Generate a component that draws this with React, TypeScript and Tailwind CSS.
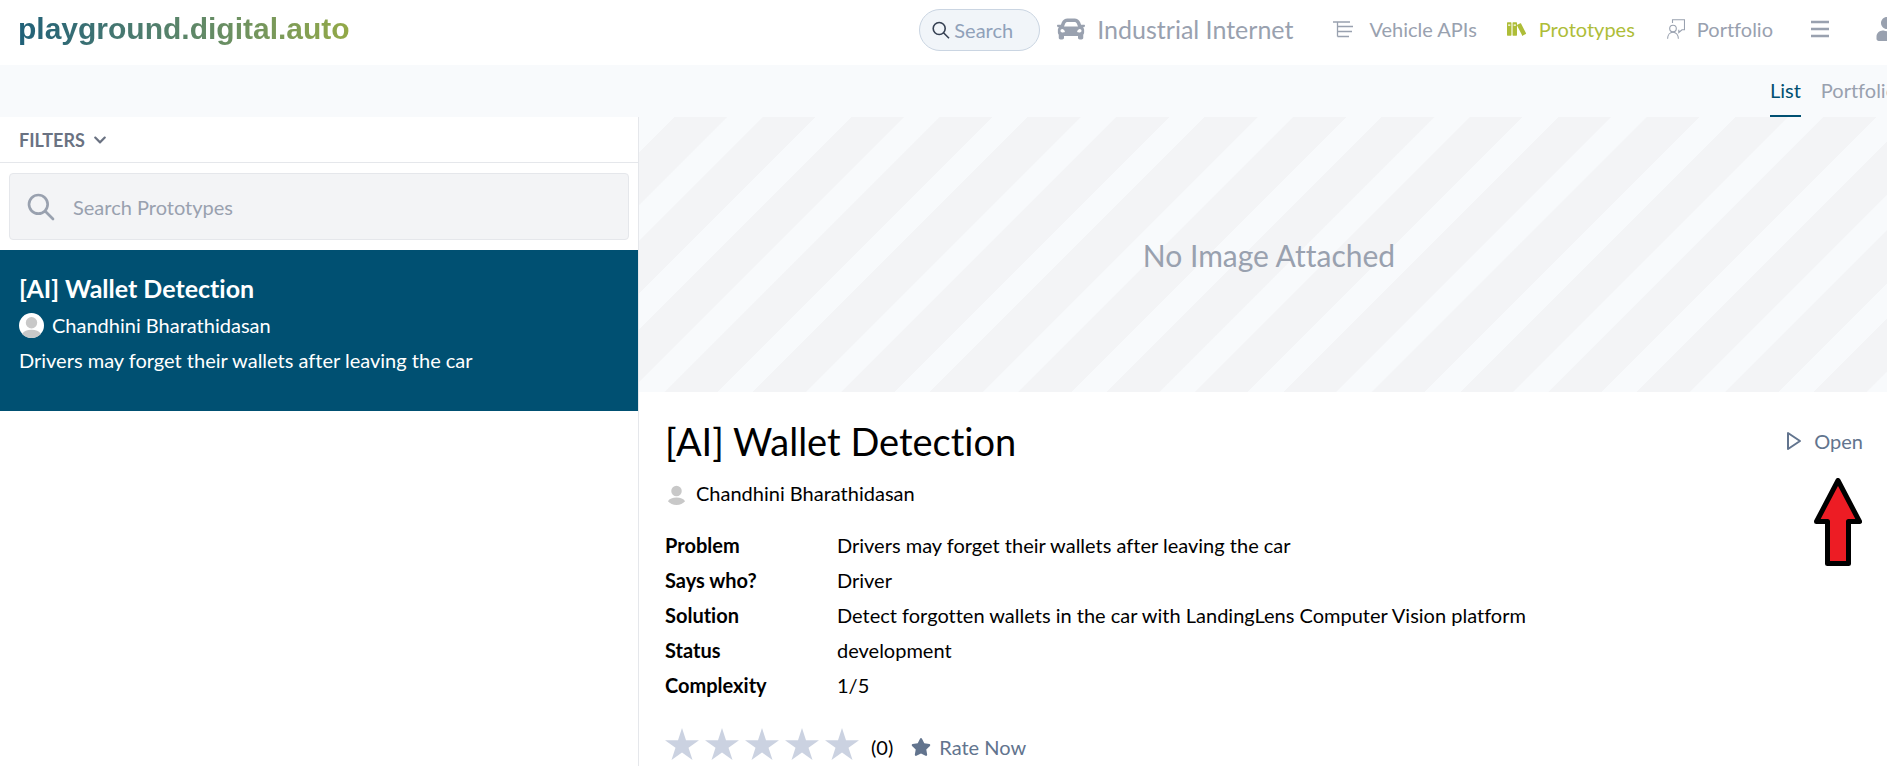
import React from "react";
import { FaCar, FaUser, FaChevronDown, FaStar } from "react-icons/fa";
import { ImBooks } from "react-icons/im";
import { HiOutlineSearch } from "react-icons/hi";

const details = [
  ["Problem", "Drivers may forget their wallets after leaving the car"],
  ["Says who?", "Driver"],
  ["Solution", "Detect forgotten wallets in the car with LandingLens Computer Vision platform"],
  ["Status", "development"],
  ["Complexity", "1/5"],
];

function SmallSearchIcon() {
  return (
    <svg viewBox="0 0 18 18" className="size-[18px] shrink-0 text-gray-700" fill="none" stroke="currentColor" strokeWidth="1.6">
      <circle cx="7.200" cy="7.500" r="6" />
      <path d="M11.500 11.800l5.500 5.400" />
    </svg>
  );
}

function TreeIcon() {
  return (
    <svg viewBox="0 0 20 18" className="h-[18px] w-5" fill="none" stroke="currentColor" strokeWidth="1.3">
      <path d="M0 2h17M4.500 2v14.500M4.500 6.500H20M4.500 11.500H19M4.500 16.500H16" />
    </svg>
  );
}

function PersonChatIcon() {
  return (
    <svg viewBox="0 0 18 20" className="h-5 w-[18px]" fill="none" stroke="currentColor" strokeWidth="1.1">
      <path d="M5.500 4V.8h12v10h-2.500l-3.200 2.700v-2.700" />
      <circle cx="6" cy="9.500" r="3.300" />
      <path d="M.6 19.800c0-4 2.400-6.600 5.400-6.600s5.400 2.600 5.400 6.600" />
    </svg>
  );
}

function Avatar({ className }: { className: string }) {
  return (
    <svg viewBox="0 0 25 25" className={className}>
      <circle cx="12.500" cy="12.500" r="12.500" fill="#fff" />
      <circle cx="12.500" cy="9.700" r="5.700" fill="#c8c8c8" />
      <path d="M3.200 21c1.500-3 5-4.200 9.300-4.200s7.800 1.200 9.300 4.200c-2.200 2.600-5.500 4-9.300 4s-7.100-1.400-9.300-4z" fill="#c8c8c8" />
    </svg>
  );
}

function BigStar() {
  return (
    <svg viewBox="0 0 34 32" className="h-8 w-[34px] fill-[#cbd2e1]">
      <path d="M17 0l4 12.200h13l-10.500 7.500 4 12.300L17 24.400 6.500 32l4-12.300L0 12.200h13z" />
    </svg>
  );
}

function Arrow() {
  return (
    <svg viewBox="0 0 48 88" className="absolute left-7 top-[52px] h-[88px] w-12">
      <path d="M24 2.500L45.500 43.500H34.500V85.500H13.500V43.500H2.500Z" fill="#ed1c24" stroke="#000" strokeWidth="5" strokeLinejoin="round" />
    </svg>
  );
}

export default function App() {
  return (
    <div className="min-h-screen overflow-x-hidden bg-white font-['Lato',sans-serif] text-xl leading-[30px] text-black [font-variant-ligatures:none]">
      <div className="flex min-h-screen w-[calc(100%+12px)] flex-col">
        <header className="flex h-[65px] shrink-0 items-start justify-between pl-[18px] pt-[9px] text-gray-400">
          <a href="#home" className="bg-linear-to-r from-[#1f6078] to-[#93a946] bg-clip-text font-['Liberation_Sans',sans-serif] text-[30px] font-bold leading-10 text-transparent">
            playground.digital.auto
          </a>
          <nav className="flex items-center">
            <label className="flex h-[42px] w-[121px] items-center gap-1 rounded-full border border-slate-300 bg-slate-100 pl-3">
              <SmallSearchIcon />
              <input aria-label="Search" placeholder="Search" className="w-full min-w-0 bg-transparent outline-none placeholder:text-slate-400" />
            </label>
            <a href="#model" className="ml-[17px] flex items-center gap-3 pb-0.5 text-[25px]">
              <FaCar className="size-7" />
              Industrial Internet
            </a>
            <a href="#apis" className="ml-10 flex items-center gap-4 pb-0.5">
              <TreeIcon />
              Vehicle APIs
            </a>
            <a href="#prototypes" className="ml-[30px] flex items-center gap-3 pb-0.5 text-[#aebd38]">
              <ImBooks className="size-5" />
              Prototypes
            </a>
            <a href="#portfolio" className="ml-8 flex items-center gap-3 pb-0.5">
              <PersonChatIcon />
              Portfolio
            </a>
            <button aria-label="Menu" className="ml-[38px] pb-0.5">
              <svg viewBox="0 0 18 18" className="size-[18px]" stroke="currentColor" strokeWidth="2.600">
                <path d="M0 2h18M0 9h18M0 16h18" />
              </svg>
            </button>
            <button aria-label="Account" className="ml-[46px] pb-0.5">
              <FaUser className="size-6" />
            </button>
          </nav>
        </header>

        <nav className="flex h-[52px] shrink-0 items-end justify-end gap-5 bg-slate-50 pr-0.5 text-gray-400">
          <a href="#list" className="border-b-2 border-[#005072] pb-2.5 text-[#005072]">List</a>
          <a href="#portfolio-view" className="border-b-2 border-transparent pb-2.5">Portfolio</a>
        </nav>

        <div className="flex grow">
          <aside className="w-[639px] shrink-0 border-r border-gray-200">
            <button className="flex h-[46px] w-full items-center gap-2 border-b border-gray-200 pl-[19px] text-lg font-bold text-gray-500">
              FILTERS
              <FaChevronDown className="size-3.5" />
            </button>
            <div className="px-[9px] py-2.5">
              <label className="flex h-[67px] items-center gap-4 rounded border border-gray-200 bg-gray-100 pl-[15px] text-gray-400">
                <HiOutlineSearch className="size-8 shrink-0" />
                <input aria-label="Search Prototypes" placeholder="Search Prototypes" className="w-full bg-transparent outline-none placeholder:text-gray-400" />
              </label>
            </div>
            <a href="#wallet" className="flex h-[161px] flex-col bg-[#005072] px-[19px] pt-5 text-white">
              <span className="text-[25px] font-bold leading-9">[AI] Wallet Detection</span>
              <span className="mt-1 flex items-center gap-2">
                <Avatar className="size-[25px]" />
                Chandhini Bharathidasan
              </span>
              <span className="mt-[5px]">Drivers may forget their wallets after leaving the car</span>
            </a>
          </aside>

          <main className="grow">
            <div className="flex h-[275px] items-center justify-center bg-[repeating-linear-gradient(135deg,#f8fafc_0px,#f8fafc_25px,#f3f4f6_25px,#f3f4f6_62px,#f8fafc_63px,#f8fafc_87px,#f3f4f6_88px,#f3f4f6_125px)] text-[30px] text-gray-400">
              No Image Attached
            </div>
            <div className="px-[26px] pt-6">
              <div className="flex items-center justify-between">
                <h1 className="text-[38px] leading-[50px]">[AI] Wallet Detection</h1>
                <div className="relative mr-2.5">
                  <button className="flex items-center gap-3 text-slate-500">
                    <svg viewBox="0 0 16 20" className="h-5 w-4" fill="none" stroke="currentColor" strokeWidth="2" strokeLinejoin="round">
                      <path d="M2 2v16l12-8z" />
                    </svg>
                    Open
                  </button>
                  <Arrow />
                </div>
              </div>
              <div className="mt-3 flex items-center gap-2">
                <Avatar className="size-[23px]" />
                Chandhini Bharathidasan
              </div>
              <dl className="mt-[22px] grid grid-cols-[172px_1fr] gap-y-[5px]">
                {details.map(([label, value]) => (
                  <React.Fragment key={label}>
                    <dt className="font-bold">{label}</dt>
                    <dd>{value}</dd>
                  </React.Fragment>
                ))}
              </dl>
              <div className="mt-7 flex items-start">
                <div className="flex gap-1.5">
                  {[1, 2, 3, 4, 5].map((n) => (
                    <BigStar key={n} />
                  ))}
                </div>
                <div className="flex items-center gap-[18px] pl-3 pt-1">
                  <span>(0)</span>
                  <button className="flex items-center gap-2 text-slate-500">
                    <FaStar className="size-5" />
                    Rate Now
                  </button>
                </div>
              </div>
            </div>
          </main>
        </div>
      </div>
    </div>
  );
}
